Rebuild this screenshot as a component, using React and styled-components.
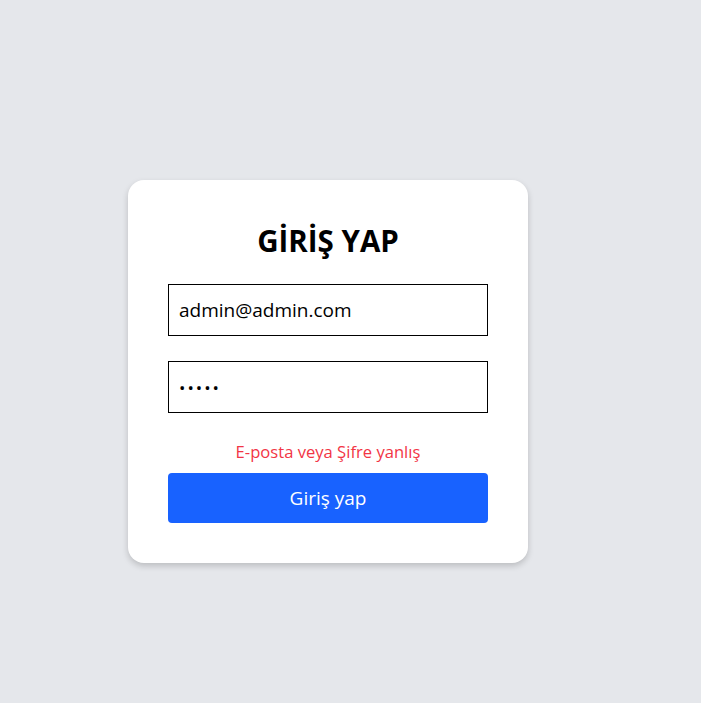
import React from "react";
import styled, { createGlobalStyle } from "styled-components";

const Global = createGlobalStyle`
  html, body { margin: 0; padding: 0; background: #e5e7eb; }
  body { font-family: "Open Sans", "Noto Sans", sans-serif; }
  * { box-sizing: border-box; }
`;

const Page = styled.div`
  min-height: 703px;
  display: flex;
  align-items: flex-start;
  justify-content: center;
  padding: 180px 45px 0 0;
  background: #e5e7eb;
`;

const Card = styled.form`
  width: 400px;
  background: #fff;
  border-radius: 16px;
  box-shadow: 0 3px 6px rgba(0, 0, 0, 0.18);
  padding: 43px 40px 40px;
  display: flex;
  flex-direction: column;
`;

const Title = styled.h1`
  margin: 0 0 25px;
  text-align: center;
  font-size: 29.5px;
  line-height: 36px;
  font-weight: 700;
  color: #000;
`;

const Input = styled.input`
  width: 320px;
  height: 52px;
  border: 1px solid #000;
  border-radius: 0;
  padding: 0 10px;
  font-family: inherit;
  font-size: ${(p) => (p.type === "password" ? "17px" : "19px")};
  color: #000;
  outline: none;
  margin-bottom: ${(p) => p.$mb}px;
  background: #fff;
  letter-spacing: ${(p) => (p.type === "password" ? "2px" : "0")};
`;

const ErrorText = styled.p`
  margin: 0 0 9px;
  text-align: center;
  color: #f23545;
  font-size: 16.6px;
  line-height: 24px;
`;

const Button = styled.button`
  width: 320px;
  height: 50px;
  border: none;
  border-radius: 4px;
  background: #1862ff;
  color: #fff;
  font-family: inherit;
  font-size: 19px;
  cursor: pointer;
`;

export default function App() {
  return (
    <>
      <Global />
      <Page>
        <Card onSubmit={(e) => e.preventDefault()}>
          <Title>GİRİŞ YAP</Title>
          <Input type="email" defaultValue="admin@admin.com" $mb={25} />
          <Input type="password" defaultValue="12345" $mb={27} />
          <ErrorText>E-posta veya Şifre yanlış</ErrorText>
          <Button type="submit">Giriş yap</Button>
        </Card>
      </Page>
    </>
  );
}
